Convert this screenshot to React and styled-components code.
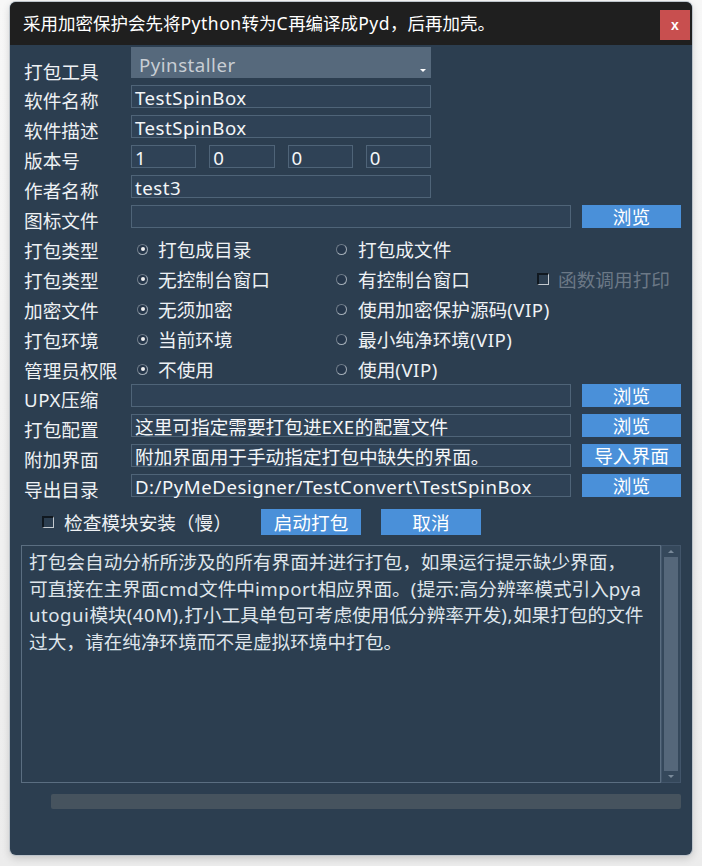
import React from 'react'
import styled, { createGlobalStyle } from 'styled-components'

const GlobalStyle = createGlobalStyle`
  html, body {
    margin: 0;
    padding: 0;
    background: #f3f3f3;
  }
  body {
    font-family: "Noto Sans", "Noto Sans CJK SC", sans-serif;
  }
  * {
    box-sizing: border-box;
  }
`

const Page = styled.div`
  width: 702px;
  height: 866px;
  padding: 2px 10px 11px 10px;
  background: linear-gradient(#f7f7f7, #ececec);
`

const Window = styled.div`
  height: 853px;
  display: flex;
  flex-direction: column;
  border-radius: 6px;
  overflow: hidden;
  background: #2c3e50;
  box-shadow: 0 0 0 1px #bcc3ca, 0 3px 8px rgba(0, 0, 0, 0.18);
`

const TitleBar = styled.div`
  height: 43px;
  flex: none;
  display: flex;
  align-items: center;
  justify-content: space-between;
  padding: 0 2px 0 13px;
  background: #1f1f1f;
`

const Title = styled.div`
  color: #fff;
  font-size: 17.5px;
  line-height: 1.3;
`

const Close = styled.div`
  width: 30px;
  height: 30px;
  margin-top: 3px;
  display: flex;
  align-items: center;
  justify-content: center;
  background: #c84f4f;
  color: #fff;
  font: bold 14px "Liberation Sans", sans-serif;
`

const Body = styled.div`
  flex: 1;
  display: flex;
  flex-direction: column;
  padding: 2px 11px 0 11px;
`

const Row = styled.div`
  display: flex;
  align-items: center;
  height: ${p => p.$h || 23}px;
  margin-top: ${p => (p.$mt === undefined ? 7 : p.$mt)}px;
`

// padding-top pushes the label down, as the original labels sit a bit low
const Label = styled.div`
  width: 110px;
  flex: none;
  padding: ${p => p.$drop || 4}px 0 0 3px;
  color: #eef1f4;
  font-size: 18.67px;
  line-height: 1.2;
  white-space: nowrap;
`

const Lat = styled.span`
  letter-spacing: 0.5px;
`

const Txt = ({ children }) => {
  if (typeof children !== 'string') return children
  return children
    .split(/([\x20-\x7e]+)/)
    .map((part, i) => (/[\x20-\x7e]/.test(part) ? <Lat key={i}>{part}</Lat> : part))
}

const Combo = styled.div`
  width: 300px;
  height: 31px;
  display: flex;
  align-items: center;
  padding-left: 8px;
  background: #56697c;
  color: #c8ced4;
  font-size: 18.67px;
`

const ComboText = styled.span`
  flex: 1;
  line-height: 1.2;
  margin-top: 5px;
`

const ComboArrow = styled.span`
  align-self: flex-end;
  margin: 0 5px 6px 0;
  width: 0;
  height: 0;
  border-left: 3px solid transparent;
  border-right: 3px solid transparent;
  border-top: 3px solid #fff;
`

const Input = styled.div`
  width: ${p => p.$w || 300}px;
  flex: ${p => (p.$grow ? 1 : 'none')};
  height: 23px;
  display: flex;
  align-items: center;
  padding: 1px 0 0 3px;
  background: #2f4256;
  border: 1px solid #4f6478;
  color: #f4f6f8;
  font-size: 18.67px;
  line-height: 21px;
  white-space: nowrap;
`

const VersionGroup = styled.div`
  width: 300px;
  display: flex;
  gap: 13px;
`

const Button = styled.div`
  width: ${p => p.$w || 99}px;
  height: ${p => p.$h || 23}px;
  margin-left: ${p => (p.$ml === undefined ? 11 : p.$ml)}px;
  flex: none;
  display: flex;
  align-items: center;
  justify-content: center;
  background: #4a90d9;
  color: #fff;
  font-size: 18.67px;
  line-height: 21px;
`

const Option = styled.div`
  width: ${p => p.$w || 199}px;
  flex: none;
  display: flex;
  align-items: center;
  gap: ${p => p.$gap || 10}px;
  padding-left: 6px;
  color: ${p => (p.$disabled ? '#6b7886' : '#eef1f4')};
  font-size: 18.67px;
  line-height: 1.2;
  white-space: nowrap;
`

const Radio = styled.span`
  width: 11px;
  height: 11px;
  flex: none;
  border-radius: 50%;
  border: 1px solid #a3adb7;
  border-top-color: #6f7c89;
  border-left-color: #6f7c89;
  background: #25364a;
  display: flex;
  align-items: center;
  justify-content: center;
  &::after {
    content: '';
    width: 4px;
    height: 4px;
    border-radius: 50%;
    background: ${p => (p.$on ? '#f2f2f2' : 'transparent')};
  }
`

const Check = styled.span`
  width: 12px;
  height: 12px;
  flex: none;
  border: 1px solid #c3c9cf;
  border-top: 2px solid #101820;
  border-left: 2px solid #101820;
`

const OptionText = styled.span`
  padding-top: 3px;
`

const CheckWrap = styled.div`
  width: 240px;
  flex: none;
  display: flex;
  align-items: center;
  gap: 10px;
  padding-left: 21px;
  color: #eef1f4;
  font-size: 18.67px;
  line-height: 1.2;
  white-space: nowrap;
`

const Notes = styled.div`
  margin-top: 10px;
  height: 238px;
  display: flex;
`

const NoteBox = styled.div`
  flex: 1;
  border: 1px solid #5b6e81;
  padding: 3px 0 0 7px;
  color: #dfe5eb;
  font-size: 18.67px;
  line-height: 26.5px;
  overflow: hidden;
`

const NoteLine = styled.div`
  white-space: nowrap;
`

const ScrollTrack = styled.div`
  width: 20px;
  flex: none;
  display: flex;
  flex-direction: column;
  align-items: center;
  padding: 3px 2px 3px 2px;
  background: #35485b;
  border: 1px solid #42556a;
`

const Arrow = styled.span`
  width: 0;
  height: 0;
  margin: 1px 0 4px 0;
  border-left: 3px solid transparent;
  border-right: 3px solid transparent;
  ${p =>
    p.$down
      ? 'border-top: 3px solid #7a8a9a; margin: 4px 0 1px 0;'
      : 'border-bottom: 3px solid #7a8a9a;'}
`

const Thumb = styled.div`
  flex: 1;
  width: 14px;
  background: #55677a;
`

const HBar = styled.div`
  margin: 11px 0 0 30px;
  height: 15px;
  border-radius: 2px;
  background: #46535e;
`

const notes = [
  '打包会自动分析所涉及的所有界面并进行打包，如果运行提示缺少界面，',
  '可直接在主界面cmd文件中import相应界面。(提示:高分辨率模式引入pya',
  'utogui模块(40M),打小工具单包可考虑使用低分辨率开发),如果打包的文件',
  '过大，请在纯净环境而不是虚拟环境中打包。',
]

const radioRows = [
  { label: '打包类型', a: '打包成目录', b: '打包成文件' },
  { label: '打包类型', a: '无控制台窗口', b: '有控制台窗口', extra: '函数调用打印' },
  { label: '加密文件', a: '无须加密', b: '使用加密保护源码(VIP)' },
  { label: '打包环境', a: '当前环境', b: '最小纯净环境(VIP)' },
  { label: '管理员权限', a: '不使用', b: '使用(VIP)' },
]

const pathRows = [
  { label: 'UPX压缩', value: '', btn: '浏览', mt: 0 },
  { label: '打包配置', value: '这里可指定需要打包进EXE的配置文件', btn: '浏览' },
  { label: '附加界面', value: '附加界面用于手动指定打包中缺失的界面。', btn: '导入界面' },
  { label: '导出目录', value: 'D:/PyMeDesigner/TestConvert\\TestSpinBox', btn: '浏览' },
]

const App = () => {
  return (
    <Page>
      <GlobalStyle />
      <Window>
        <TitleBar>
          <Title>
            <Txt>采用加密保护会先将Python转为C再编译成Pyd，后再加壳。</Txt>
          </Title>
          <Close>x</Close>
        </TitleBar>
        <Body>
          <Row $h={31} $mt={0}>
            <Label $drop={19}>打包工具</Label>
            <Combo>
              <ComboText>
                <Lat>Pyinstaller</Lat>
              </ComboText>
              <ComboArrow />
            </Combo>
          </Row>
          <Row>
            <Label $drop={9}>软件名称</Label>
            <Input>
              <Lat>TestSpinBox</Lat>
            </Input>
          </Row>
          <Row>
            <Label $drop={9}>软件描述</Label>
            <Input>
              <Lat>TestSpinBox</Lat>
            </Input>
          </Row>
          <Row>
            <Label $drop={9}>版本号</Label>
            <VersionGroup>
              {['1', '0', '0', '0'].map((v, i) => (
                <Input key={i} $grow>{v}</Input>
              ))}
            </VersionGroup>
          </Row>
          <Row>
            <Label $drop={9}>作者名称</Label>
            <Input>
              <Lat>test3</Lat>
            </Input>
          </Row>
          <Row>
            <Label $drop={9}>图标文件</Label>
            <Input $w={440} />
            <Button>浏览</Button>
          </Row>

          {radioRows.map((r, i) => (
            <Row key={i} $h={30} $mt={i === 0 ? 6 : 0}>
              <Label>{r.label}</Label>
              <Option>
                <Radio $on />
                <OptionText>{r.a}</OptionText>
              </Option>
              <Option $w={201} $gap={11}>
                <Radio />
                <OptionText>
                  <Txt>{r.b}</Txt>
                </OptionText>
              </Option>
              {r.extra && (
                <Option $w={150} $gap={9} $disabled>
                  <Check />
                  <OptionText>{r.extra}</OptionText>
                </Option>
              )}
            </Row>
          ))}

          {pathRows.map((r, i) => (
            <Row key={i} $mt={r.mt}>
              <Label $drop={9}>
                <Txt>{r.label}</Txt>
              </Label>
              <Input $w={440}>
                <Txt>{r.value}</Txt>
              </Input>
              <Button>{r.btn}</Button>
            </Row>
          ))}

          <Row $h={26} $mt={12}>
            <CheckWrap>
              <Check />
              <OptionText>检查模块安装（慢）</OptionText>
            </CheckWrap>
            <Button $w={100} $h={26} $ml={0}>启动打包</Button>
            <Button $w={100} $h={26} $ml={20}>取消</Button>
          </Row>

          <Notes>
            <NoteBox>
              {notes.map((n, i) => (
                <NoteLine key={i}>
                  <Txt>{n}</Txt>
                </NoteLine>
              ))}
            </NoteBox>
            <ScrollTrack>
              <Arrow />
              <Thumb />
              <Arrow $down />
            </ScrollTrack>
          </Notes>

          <HBar />
        </Body>
      </Window>
    </Page>
  )
}

export default App
